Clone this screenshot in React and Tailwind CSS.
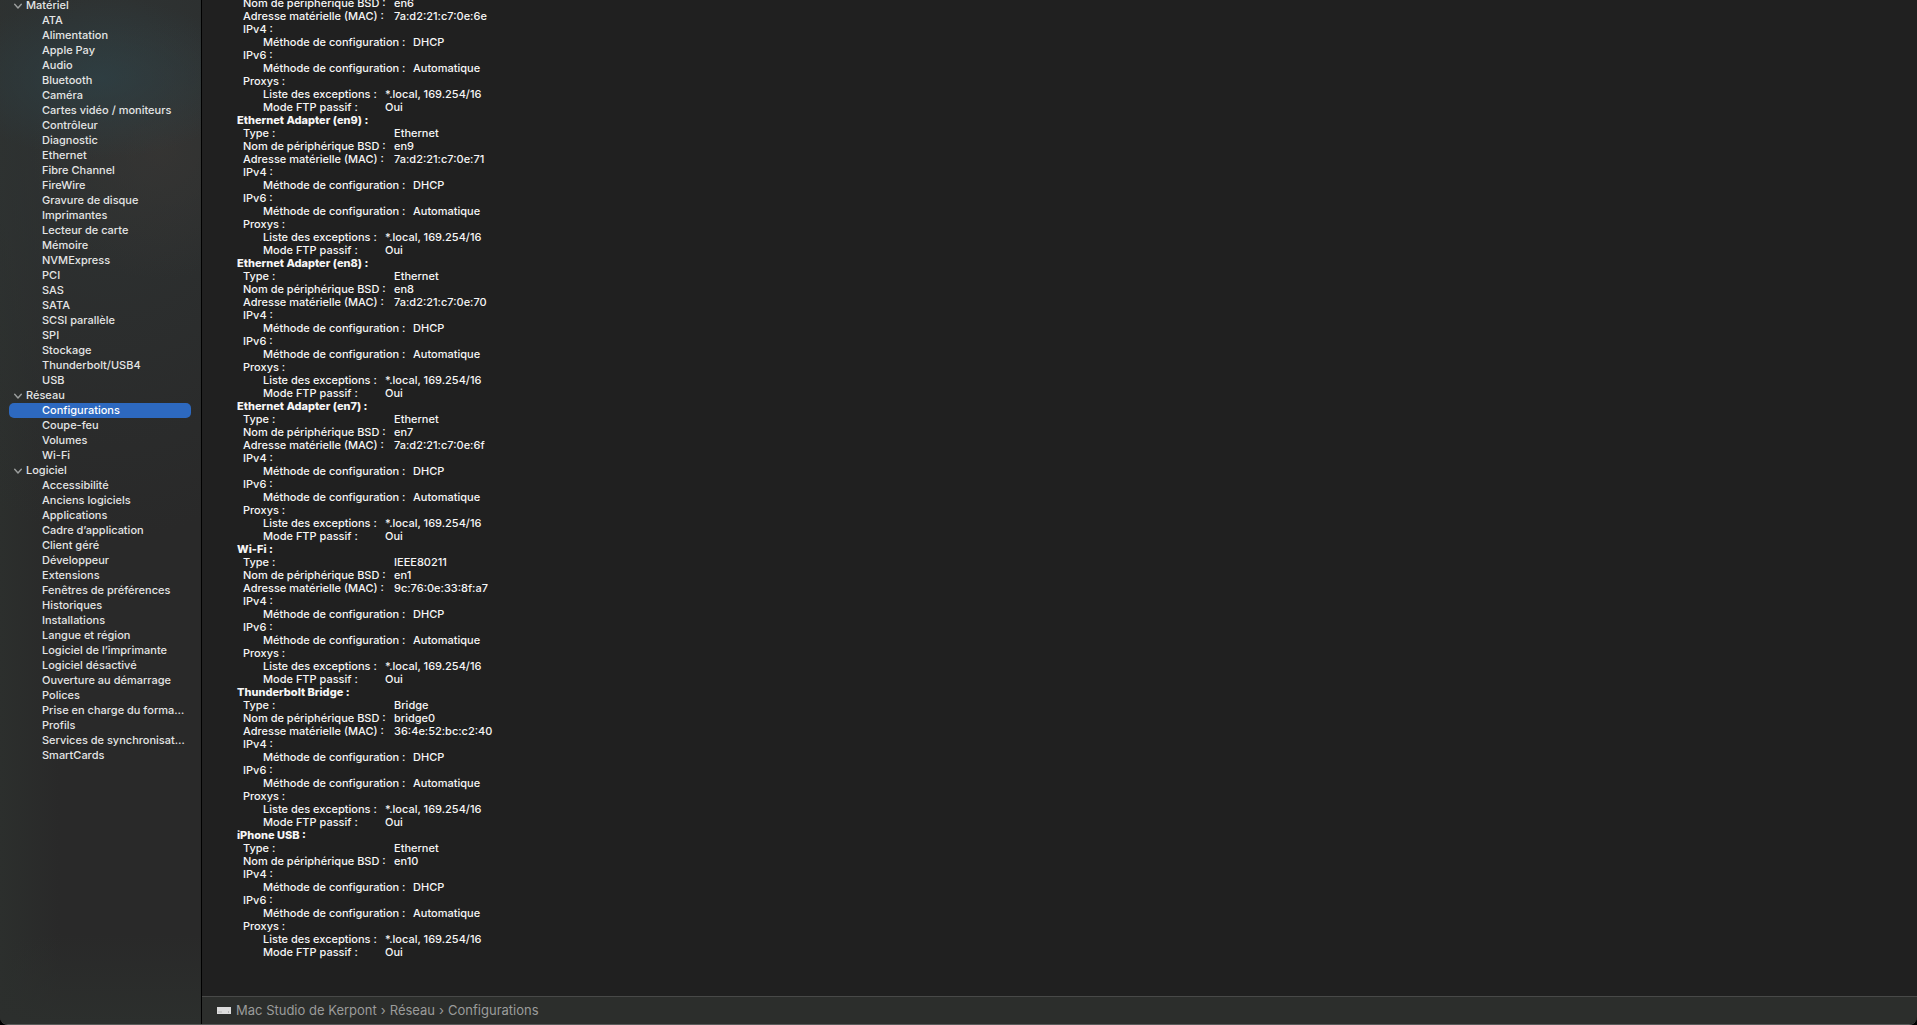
const groups = [
    {
        title: "Matériel",
        items: [
            "ATA", "Alimentation", "Apple Pay", "Audio", "Bluetooth", "Caméra", "Cartes vidéo / moniteurs",
            "Contrôleur", "Diagnostic", "Ethernet", "Fibre Channel", "FireWire", "Gravure de disque",
            "Imprimantes", "Lecteur de carte", "Mémoire", "NVMExpress", "PCI", "SAS", "SATA",
            "SCSI parallèle", "SPI", "Stockage", "Thunderbolt/USB4", "USB",
        ],
    },
    {
        title: "Réseau",
        items: ["Configurations", "Coupe-feu", "Volumes", "Wi-Fi"],
    },
    {
        title: "Logiciel",
        items: [
            "Accessibilité", "Anciens logiciels", "Applications", "Cadre d’application", "Client géré",
            "Développeur", "Extensions", "Fenêtres de préférences", "Historiques", "Installations",
            "Langue et région", "Logiciel de l’imprimante", "Logiciel désactivé", "Ouverture au démarrage",
            "Polices", "Prise en charge du forma…", "Profils", "Services de synchronisat…", "SmartCards",
        ],
    },
];

const services = [
    { bsd: "en6", mac: "7a:d2:21:c7:0e:6e" },
    { name: "Ethernet Adapter (en9)", type: "Ethernet", bsd: "en9", mac: "7a:d2:21:c7:0e:71" },
    { name: "Ethernet Adapter (en8)", type: "Ethernet", bsd: "en8", mac: "7a:d2:21:c7:0e:70" },
    { name: "Ethernet Adapter (en7)", type: "Ethernet", bsd: "en7", mac: "7a:d2:21:c7:0e:6f" },
    { name: "Wi-Fi", type: "IEEE80211", bsd: "en1", mac: "9c:76:0e:33:8f:a7" },
    { name: "Thunderbolt Bridge", type: "Bridge", bsd: "bridge0", mac: "36:4e:52:bc:c2:40" },
    { name: "iPhone USB", type: "Ethernet", bsd: "en10" },
];

function Chevron() {
    return (
        <svg className="h-2 w-2 shrink-0" viewBox="0 0 8 8" fill="none" stroke="#9b9e9d" strokeWidth="1.4" strokeLinecap="round" strokeLinejoin="round">
            <path d="M0.7 2.2 4 6 7.3 2.2" />
        </svg>
    );
}

function Row({ label, value, width = "w-[151px]" }) {
    return (
        <div className="flex">
            <dt className={`shrink-0 ${width}`}>{label} :</dt>
            {value && <dd>{value}</dd>}
        </div>
    );
}

function Section({ label, children }) {
    return (
        <div>
            <dt>{label} :</dt>
            <dd>
                <dl className="pl-5">{children}</dl>
            </dd>
        </div>
    );
}

function Service({ name, type, bsd, mac }) {
    return (
        <section>
            {name && <h2 className="font-extrabold">{name} :</h2>}
            <dl className="pl-1.5">
                {type && <Row label="Type" value={type} />}
                <Row label="Nom de périphérique BSD" value={bsd} />
                {mac && <Row label="Adresse matérielle (MAC)" value={mac} />}
                <Section label="IPv4">
                    <Row label="Méthode de configuration" value="DHCP" width="w-[150px]" />
                </Section>
                <Section label="IPv6">
                    <Row label="Méthode de configuration" value="Automatique" width="w-[150px]" />
                </Section>
                <Section label="Proxys">
                    <Row label="Liste des exceptions" value="*.local, 169.254/16" width="w-[122px]" />
                    <Row label="Mode FTP passif" value="Oui" width="w-[122px]" />
                </Section>
            </dl>
        </section>
    );
}

function Sidebar() {
    return (
        <nav className="w-[202px] shrink-0 overflow-hidden border-r border-black bg-[#292929] bg-[radial-gradient(ellipse_150px_80px_at_100px_78px,rgba(46,64,69,0.8),transparent),radial-gradient(ellipse_130px_130px_at_160px_150px,rgba(56,54,52,0.7),transparent),radial-gradient(ellipse_320px_480px_at_110px_60px,rgba(47,52,52,0.95),transparent),linear-gradient(to_top,#2c2f2d,transparent_90px),linear-gradient(to_right,#2c2f2d,transparent_60px)] text-[11px] leading-[15px] font-medium text-[#e4e5e5]">
            <div className="-mt-0.5">
                {groups.map((group) => (
                    <div key={group.title}>
                        <button className="flex w-full items-center gap-1 pl-3.5 text-left">
                            <Chevron />
                            <span>{group.title}</span>
                        </button>
                        <ul className="pr-2.5 pl-[9px]">
                            {group.items.map((item) => (
                                <li key={item}>
                                    <a
                                        href="#"
                                        className={`block rounded-[5px] pl-[33px] whitespace-nowrap ${item === "Configurations" ? "bg-[#2d69c0] text-white" : ""}`}
                                    >
                                        {item}
                                    </a>
                                </li>
                            ))}
                        </ul>
                    </div>
                ))}
            </div>
        </nav>
    );
}

export default function App() {
    return (
        <div className="h-screen bg-black font-['Inter',sans-serif]">
            <div className="flex h-full overflow-hidden rounded-b-lg border-b border-[#5a5b5a]">
                <Sidebar />
                <div className="flex min-w-0 flex-1 flex-col bg-[#202020]">
                    <main className="min-h-0 flex-1 overflow-hidden pl-[35px] text-[11px] leading-[13px] font-medium text-[#f6f6f6]">
                        <div className="-mt-[3px]">
                            {services.map((service) => (
                                <Service key={service.bsd} {...service} />
                            ))}
                        </div>
                    </main>

                    {/* path bar */}
                    <footer className="flex h-7 items-center gap-1 border-t border-[#484948] bg-[#2c2e2c] pl-[15px] text-[13px] text-[#9b9c9b]">
                        <svg className="mr-px h-2 w-3.5" viewBox="0 0 14 8">
                            <rect width="14" height="7" fill="#dcdcdc" />
                            <path d="M1.5 5h1M3.5 5h1M11 5h1" stroke="#8a8a8a" strokeWidth="1" />
                        </svg>
                        <span>Mac Studio de Kerpont</span>
                        <span>›</span>
                        <span>Réseau</span>
                        <span>›</span>
                        <span>Configurations</span>
                    </footer>
                </div>
            </div>
        </div>
    );
}
